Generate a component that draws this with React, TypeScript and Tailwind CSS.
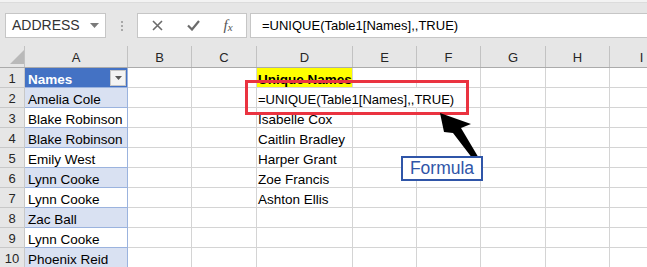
import React from "react"

const colW = ["w-[103px]", "w-[64px]", "w-[65px]", "w-[96px]", "w-[64px]", "w-[64px]", "w-[65px]", "w-[64px]", "w-[64px]"]
const letters = ["A", "B", "C", "D", "E", "F", "G", "H", "I"]

const names = [
  "Amelia Cole",
  "Blake Robinson",
  "Blake Robinson",
  "Emily West",
  "Lynn Cooke",
  "Lynn Cooke",
  "Zac Ball",
  "Lynn Cooke",
  "Phoenix Reid",
]

const unique: Record<number, string> = {
  3: "Isabelle Cox",
  4: "Caitlin Bradley",
  5: "Harper Grant",
  6: "Zoe Francis",
  7: "Ashton Ellis",
}

const formula = "=UNIQUE(Table1[Names],,TRUE)"

function Toolbar() {
  return (
    <div className="h-[46px] shrink-0 bg-[#e6e6e6]">
      <div className="h-[3px] bg-[#f3f3f3] border-b border-[#dcdcdc]" />
      <div className="flex items-start pl-[5px] pt-[10px]">
        <div className="flex h-[25px] w-[101px] items-center justify-between border border-[#c6c6c6] bg-white pl-[6px] pr-[6px]">
          <span className="text-[14px] text-[#333]">ADDRESS</span>
          <svg width="9" height="5" viewBox="0 0 9 5">
            <path d="M0 0h9L4.5 5z" fill="#7a7a7a" />
          </svg>
        </div>
        <div className="flex h-[25px] w-[31px] flex-col items-center justify-center gap-[2px]">
          <div className="h-[2px] w-[2px] bg-[#a8a8a8]" />
          <div className="h-[2px] w-[2px] bg-[#a8a8a8]" />
          <div className="h-[2px] w-[2px] bg-[#a8a8a8]" />
        </div>
        <div className="flex h-[25px] w-[110px] items-center border border-[#c6c6c6] bg-white">
          <div className="flex w-[38px] justify-center">
            <svg width="11" height="11" viewBox="0 0 11 11">
              <path d="M1 1l9 9M10 1l-9 9" stroke="#6b6b6b" strokeWidth="1.6" />
            </svg>
          </div>
          <div className="flex w-[34px] justify-center">
            <svg width="13" height="11" viewBox="0 0 13 11">
              <path d="M1 5.5l4 4L12 1" stroke="#6b6b6b" strokeWidth="2.2" fill="none" />
            </svg>
          </div>
          <div className="flex w-[36px] justify-center font-['Liberation_Serif',serif] italic text-[#555]">
            <span className="text-[15px] leading-none">f</span>
            <span className="text-[11px] leading-none pt-[4px]">x</span>
          </div>
        </div>
        <div className="ml-[3px] flex h-[25px] flex-1 items-center border border-r-0 border-[#c6c6c6] bg-white pl-[11px]">
          <span className="text-[13px] text-black">{formula}</span>
        </div>
      </div>
    </div>
  )
}

function HeaderRow() {
  return (
    <div className="flex h-[22px] shrink-0 border-b border-[#ababab] bg-[#e6e6e6]">
      <div className="relative w-[25px] shrink-0 border-r border-[#c2c2c2]">
        <svg className="absolute left-[10px] top-[4px]" width="14" height="14" viewBox="0 0 14 14">
          <path d="M14 0v14H0z" fill="#b9b9b9" />
        </svg>
      </div>
      {letters.map((l, i) => (
        <div
          key={l}
          className={`${colW[i]} flex shrink-0 items-center justify-center border-r border-[#c2c2c2] pt-[2px] text-[13px] text-[#262626]`}
        >
          {l}
        </div>
      ))}
    </div>
  )
}

function Row({ n }: { n: number }) {
  const band = n % 2 === 0
  const aBg = n === 1 ? "bg-[#4472c4]" : band ? "bg-[#d9e1f2]" : "bg-white"
  return (
    <div className="flex h-[20px] shrink-0">
      <div className="flex w-[25px] shrink-0 items-center justify-center border-r border-b border-[#c8c8c8] bg-[#e6e6e6] pt-[2px] text-[13px] text-[#262626]">
        {n}
      </div>
      <div className={`relative w-[103px] shrink-0 border-r border-b border-[#9bb3de] ${aBg} pl-[3px] text-[13.5px] leading-[24px] overflow-hidden whitespace-nowrap`}>
        {n === 1 ? (
          <>
            <span className="font-bold text-white">Names</span>
            <div className="absolute right-[1px] top-[2px] flex h-[16px] w-[16px] items-center justify-center border border-[#c8c8c8] bg-[#f4f4f4]">
              <svg width="7" height="4" viewBox="0 0 7 4">
                <path d="M0 0h7L3.5 4z" fill="#595959" />
              </svg>
            </div>
          </>
        ) : (
          <span className="text-black">{names[n - 2]}</span>
        )}
      </div>
      {colW.slice(1).map((w, i) => {
        const isD = i === 2
        let content: React.ReactNode = null
        let bg = ""
        // the formula in D2 spills over E2 and F2, so those grid lines are hidden
        const spill = n === 2 && (i === 2 || i === 3)
        if (isD && n === 1) {
          bg = "bg-[#ffff00]"
          content = <span className="font-bold">Unique Names</span>
        } else if (isD && n === 2) {
          content = <span className="text-[13px]">{formula}</span>
        } else if (isD && unique[n]) {
          content = unique[n]
        }
        return (
          <div
            key={i}
            className={`${w} shrink-0 border-r border-b ${spill ? "border-r-transparent border-b-[#d4d4d4]" : "border-[#d4d4d4]"} ${bg} pl-[1px] text-[13.5px] leading-[24px] whitespace-nowrap text-black`}
          >
            {content}
          </div>
        )
      })}
    </div>
  )
}

export default function App() {
  return (
    <div className="relative flex h-[267px] w-[647px] flex-col overflow-hidden bg-white font-['Liberation_Sans',Arial,sans-serif]">
      <Toolbar />
      <HeaderRow />
      {Array.from({ length: 10 }, (_, i) => (
        <Row key={i} n={i + 1} />
      ))}

      {/* annotations */}
      <div className="absolute left-[245px] top-[80px] h-[35px] w-[224px] border-[3px] border-[#ea3340]" />
      <svg className="pointer-events-none absolute left-0 top-0" width="647" height="267" viewBox="0 0 647 267">
        <path d="M440 113L471 124L461 128L480 160L476 163L453 133L444 132Z" fill="#000" />
      </svg>
      <div className="absolute left-[401px] top-[156px] flex h-[25px] w-[82px] items-center justify-center border-2 border-[#2f55a8] bg-white">
        <span className="text-[17.5px] leading-none text-[#2f55a8]">Formula</span>
      </div>
    </div>
  )
}
